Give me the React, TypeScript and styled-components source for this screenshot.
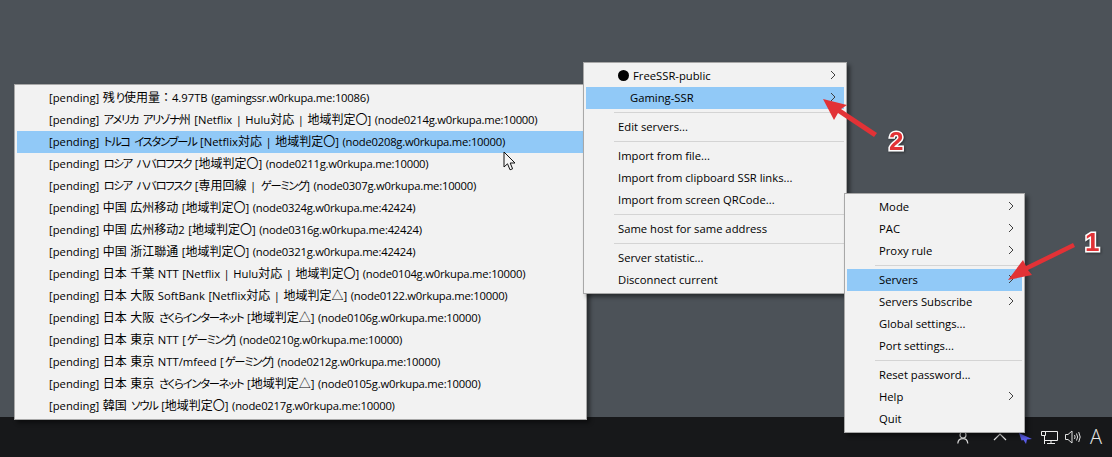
import styled, { createGlobalStyle } from 'styled-components';

const GlobalStyle = createGlobalStyle`
  html, body {
    margin: 0;
    padding: 0;
    height: 100%;
    overflow: hidden;
  }
  #root {
    height: 100%;
  }
`;

const Chevron = () => (
  <ChevronIcon width="6" height="10" viewBox="0 0 6 10">
    <path d="M1 1 L5 5 L1 9" fill="none" stroke="#404040" strokeWidth="1" />
  </ChevronIcon>
);

type Entry = { label: string; sub?: boolean; active?: boolean; dot?: boolean; indent?: boolean } | 'sep';

const servers = [
  { name: '[pending] 残り使用量：4.97TB', host: '(gamingssr.w0rkupa.me:10086)' },
  { name: '[pending] アメリカ アリゾナ州 [Netflix | Hulu対応 | 地域判定〇]', host: '(node0214g.w0rkupa.me:10000)' },
  { name: '[pending] トルコ イスタンブール [Netflix対応 | 地域判定〇]', host: '(node0208g.w0rkupa.me:10000)' },
  { name: '[pending] ロシア ハバロフスク [地域判定〇]', host: '(node0211g.w0rkupa.me:10000)' },
  { name: '[pending] ロシア ハバロフスク [専用回線 | ゲーミング]', host: '(node0307g.w0rkupa.me:10000)' },
  { name: '[pending] 中国 広州移动 [地域判定〇]', host: '(node0324g.w0rkupa.me:42424)' },
  { name: '[pending] 中国 広州移动2 [地域判定〇]', host: '(node0316g.w0rkupa.me:42424)' },
  { name: '[pending] 中国 浙江聯通 [地域判定〇]', host: '(node0321g.w0rkupa.me:42424)' },
  { name: '[pending] 日本 千葉 NTT [Netflix | Hulu対応 | 地域判定〇]', host: '(node0104g.w0rkupa.me:10000)' },
  { name: '[pending] 日本 大阪 SoftBank [Netflix対応 | 地域判定△]', host: '(node0122.w0rkupa.me:10000)' },
  { name: '[pending] 日本 大阪 さくらインターネット [地域判定△]', host: '(node0106g.w0rkupa.me:10000)' },
  { name: '[pending] 日本 東京 NTT [ゲーミング]', host: '(node0210g.w0rkupa.me:10000)' },
  { name: '[pending] 日本 東京 NTT/mfeed [ゲーミング]', host: '(node0212g.w0rkupa.me:10000)' },
  { name: '[pending] 日本 東京 さくらインターネット [地域判定△]', host: '(node0105g.w0rkupa.me:10000)' },
  { name: '[pending] 韓国 ソウル [地域判定〇]', host: '(node0217g.w0rkupa.me:10000)' },
];

const groups: Entry[] = [
  { label: 'FreeSSR-public', sub: true, dot: true },
  { label: 'Gaming-SSR', sub: true, active: true, indent: true },
  'sep',
  { label: 'Edit servers...' },
  'sep',
  { label: 'Import from file...' },
  { label: 'Import from clipboard SSR links...' },
  { label: 'Import from screen QRCode...' },
  'sep',
  { label: 'Same host for same address' },
  'sep',
  { label: 'Server statistic...' },
  { label: 'Disconnect current' },
];

const tray: Entry[] = [
  { label: 'Mode', sub: true },
  { label: 'PAC', sub: true },
  { label: 'Proxy rule', sub: true },
  'sep',
  { label: 'Servers', sub: true, active: true },
  { label: 'Servers Subscribe', sub: true },
  { label: 'Global settings...' },
  { label: 'Port settings...' },
  'sep',
  { label: 'Reset password...' },
  { label: 'Help', sub: true },
  { label: 'Quit' },
];

const renderEntries = (entries: Entry[]) =>
  entries.map((entry, i) =>
    entry === 'sep' ? (
      <Separator key={i} />
    ) : (
      <Row key={i} $active={entry.active}>
        <Label $indent={entry.indent}>
          {entry.dot && <Dot />}
          {entry.label}
        </Label>
        {entry.sub && <Chevron />}
      </Row>
    ),
  );

// the fallback font in the screenshot has narrow kana and wider kanji
const renderName = (name: string) =>
  name.split(/([\u3040-\u30ff]+|[\u4e00-\u9fff〇△：]+)/).map((part, i) => {
    if (/^[\u3040-\u30ff]/.test(part)) return <Kana key={i}>{part}</Kana>;
    if (/^[\u4e00-\u9fff〇△：]/.test(part)) return <Kanji key={i}>{part}</Kanji>;
    return part;
  });

const App = () => {
  return (
    <Screen>
      <GlobalStyle />
      <Desktop />
      <Taskbar>
        <svg width="16" height="14" viewBox="0 0 16 14">
          <circle cx="6" cy="5" r="3" fill="none" stroke="#d8d8d8" strokeWidth="1.2" />
          <path d="M0.8 13.5 C1 10 3 8.6 6 8.6 C9 8.6 10.5 10 10.8 13.5" fill="none" stroke="#d8d8d8" strokeWidth="1.2" />
          <path d="M9.5 2 C11 0.4 13.5 0.4 15 2.4" fill="none" stroke="#b0b0b0" strokeWidth="1" />
        </svg>
        <TrayChevron width="14" height="8" viewBox="0 0 14 8">
          <path d="M1 7 L7 1 L13 7" fill="none" stroke="#e6e6e6" strokeWidth="1.2" />
        </TrayChevron>
        <PlaneIcon width="13" height="11" viewBox="0 0 13 11">
          <path d="M0 0 L13 6 L8 6.5 L7 11 L4.5 7 L2.5 7.5 Z" fill="#5a5ce8" />
        </PlaneIcon>
        <NetworkIcon width="17" height="15" viewBox="0 0 17 15">
          <path d="M3.5 1.5 H16.5 V10.5 H3.5" fill="none" stroke="#eeeeee" strokeWidth="1" />
          <path d="M0.5 1.5 H4.5 V5.5 H0.5 Z" fill="#17181a" stroke="#eeeeee" strokeWidth="1" />
          <path d="M6 13.5 H14 M10 10.5 V13.5 M3.5 5.5 V14" fill="none" stroke="#eeeeee" strokeWidth="1" />
        </NetworkIcon>
        <VolumeIcon width="17" height="14" viewBox="0 0 17 14">
          <path d="M0.5 4.5 H3 L7 1 V13 L3 9.5 H0.5 Z" fill="none" stroke="#e0e0e0" strokeWidth="1" />
          <path d="M9.5 5 Q10.7 7 9.5 9 M11.5 3.5 Q13.7 7 11.5 10.5 M13.7 2 Q16.7 7 13.7 12" fill="none" stroke="#e0e0e0" strokeWidth="1" />
        </VolumeIcon>
        <ImeLetter>A</ImeLetter>
      </Taskbar>

      <ServerMenu>
        {servers.map((server, i) => (
          <Row key={server.host} $active={i === 2}>
            <ServerLabel>
              {renderName(server.name)} <Host>{server.host}</Host>
            </ServerLabel>
          </Row>
        ))}
      </ServerMenu>
      <GroupMenu>{renderEntries(groups)}</GroupMenu>
      <TrayMenu>{renderEntries(tray)}</TrayMenu>

      <Cursor width="14" height="21" viewBox="0 0 14 21">
        <path
          d="M1 1 V16 L4.5 12.8 L7 18.8 L9.6 17.8 L7.2 12 H12 Z"
          fill="#f4f4f4"
          stroke="#111"
          strokeWidth="1"
          strokeLinejoin="round"
        />
      </Cursor>

      <Arrow width="1112" height="457" viewBox="0 0 1112 457">
        <path d="M1008 280 L1023 260 L1026 266 L1073 243 L1075 247 L1028 270 L1032 275 Z" fill="#e23236" />
        <path d="M823 99 L847 105 L841 109 L877 133 L874 137 L838 113 L834 120 Z" fill="#e23236" />
      </Arrow>
      <BadgeOne>1</BadgeOne>
      <BadgeTwo>2</BadgeTwo>
    </Screen>
  );
};

export default App;

const Screen = styled.div`
  position: relative;
  display: flex;
  flex-direction: column;
  width: 1112px;
  height: 457px;
  overflow: hidden;
  font-family: 'Open Sans', 'Noto Sans CJK JP', sans-serif;
  font-size: 11.25px;
  color: #000;
`;

const Desktop = styled.div`
  flex: 1;
  background: #4c5258;
`;

const Taskbar = styled.div`
  display: flex;
  align-items: center;
  justify-content: flex-end;
  height: 40px;
  padding: 0 10px 0 0;
  background: #17181a;
`;

const TrayChevron = styled.svg`
  margin-left: 20px;
`;

const PlaneIcon = styled.svg`
  margin-left: 12px;
  position: relative;
  top: 1px;
`;

const NetworkIcon = styled.svg`
  margin-left: 9px;
`;

const VolumeIcon = styled.svg`
  margin-left: 7px;
`;

const ImeLetter = styled.span`
  margin-left: 8px;
  font-family: 'Open Sans', sans-serif;
  font-size: 20px;
  font-weight: 300;
  line-height: 20px;
  color: #e8e8e8;
`;

const Menu = styled.div`
  position: absolute;
  box-sizing: border-box;
  padding: 2px;
  background: #f2f2f2;
  border: 1px solid #a8a8a8;
  box-shadow: 3px 3px 4px rgba(0, 0, 0, 0.45);
`;

const ServerMenu = styled(Menu)`
  left: 14px;
  top: 84px;
  width: 573px;
  height: 336px;
  z-index: 1;
`;

const GroupMenu = styled(Menu)`
  left: 583px;
  top: 62px;
  width: 264px;
  height: 232px;
  z-index: 2;
`;

const TrayMenu = styled(Menu)`
  left: 844px;
  top: 193px;
  width: 181px;
  height: 240px;
  z-index: 3;
`;

const Row = styled.div<{ $active?: boolean }>`
  display: flex;
  align-items: center;
  justify-content: space-between;
  box-sizing: border-box;
  height: 22px;
  padding: 0 8px 2px 32px;
  white-space: nowrap;
  background: ${(p) => (p.$active ? '#91c9f7' : 'transparent')};
`;

const Label = styled.span<{ $indent?: boolean }>`
  display: flex;
  align-items: center;
  padding-left: ${(p) => (p.$indent ? '12px' : '0')};
`;

const ServerLabel = styled.span`
  white-space: pre;
  word-spacing: 0.6px;
`;

const Kana = styled.span`
  margin-left: 1px;
  font-feature-settings: 'palt';
  letter-spacing: -1.2px;
`;

const Kanji = styled.span`
  font-size: 12px;
`;

const Host = styled.span`
  letter-spacing: -0.22px;
`;

const Dot = styled.span`
  width: 11px;
  height: 11px;
  margin-right: 4px;
  border-radius: 50%;
  background: #000;
`;

const ChevronIcon = styled.svg`
  flex: none;
`;

const Separator = styled.div`
  height: 1px;
  margin: 3px 0 3px 28px;
  background: #d4d4d4;
`;

const Cursor = styled.svg`
  position: absolute;
  left: 503px;
  top: 151px;
  z-index: 4;
`;

const Arrow = styled.svg`
  position: absolute;
  left: 0;
  top: 0;
  z-index: 5;
  pointer-events: none;
`;

const Badge = styled.span`
  position: absolute;
  z-index: 6;
  font-family: 'Liberation Sans', sans-serif;
  font-size: 26px;
  font-weight: 700;
  line-height: 26px;
  color: #e23236;
  -webkit-text-stroke: 3px #fff;
  paint-order: stroke fill;
  filter: drop-shadow(1px 1px 1px rgba(0, 0, 0, 0.4));
`;

const BadgeOne = styled(Badge)`
  left: 1085px;
  top: 229px;
`;

const BadgeTwo = styled(Badge)`
  left: 889px;
  top: 128px;
`;
